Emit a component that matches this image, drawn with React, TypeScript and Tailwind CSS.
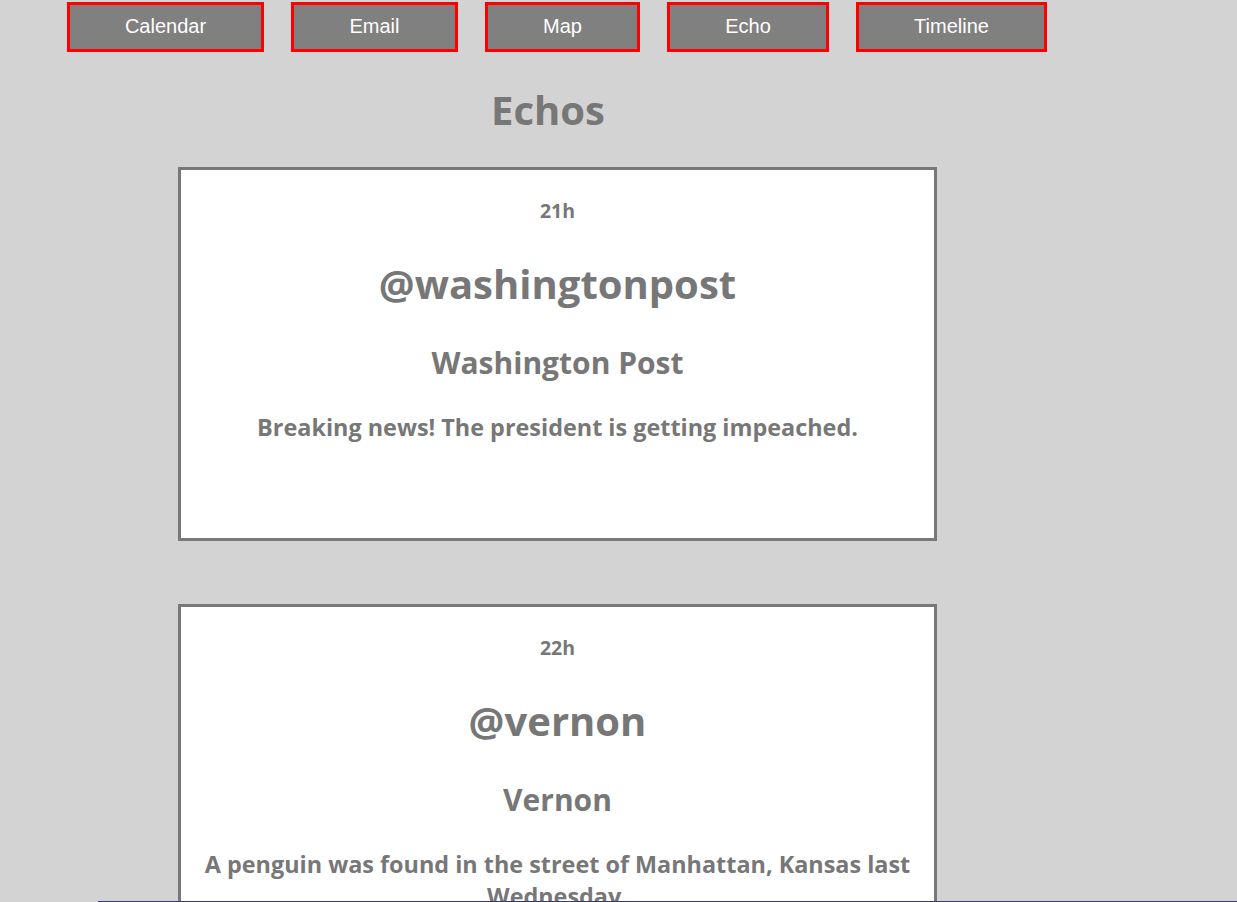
import React from 'react';

const NAV = [
  { label: 'Calendar', width: 'w-[197px]' },
  { label: 'Email', width: 'w-[167px]' },
  { label: 'Map', width: 'w-[155px]' },
  { label: 'Echo', width: 'w-[162px]' },
  { label: 'Timeline', width: 'w-[191px]' }
];

const ECHOS = [
  {
    id: 1,
    time: '21h',
    handle: '@washingtonpost',
    name: 'Washington Post',
    text: 'Breaking news! The president is getting impeached.'
  },
  {
    id: 2,
    time: '22h',
    handle: '@vernon',
    name: 'Vernon',
    text: 'A penguin was found in the street of Manhattan, Kansas last Wednesday.'
  }
];

export default function App() {
  return (
    <div className="min-h-[902px] bg-[#d3d3d3] font-['Open_Sans',sans-serif] text-[#777777]">
      {/* Nav */}
      <nav className="flex gap-[27px] pl-[67px] pt-[2px]">
        {NAV.map(item => (
          <button
            key={item.label}
            className={`${item.width} h-[50px] bg-[#808080] border-[3px] border-[#ff0000] pb-[2px] text-white text-[20px] font-['Liberation_Sans',Arial,sans-serif]`}
          >
            {item.label}
          </button>
        ))}
      </nav>

      <h1 className="mt-[34px] pr-[141px] text-center text-[40px] leading-[48px] font-bold">Echos</h1>

      {/* Echo list */}
      <div className="mt-[33px] ml-[178px] w-[759px] flex flex-col gap-[63px]">
        {ECHOS.map(echo => (
          <div key={echo.id} className="bg-white border-[3px] border-[#787878] text-center pt-[29px] pb-[95px] px-[20px]">
            <div className="text-[19.5px] leading-[24px] font-bold">{echo.time}</div>
            <div className="mt-[34px] text-[40px] leading-[54px] font-bold">{echo.handle}</div>
            <div className="mt-[33px] text-[30px] leading-[38px] font-bold">{echo.name}</div>
            <p className="mt-[29px] text-[23.4px] leading-[32px] font-bold">{echo.text}</p>
          </div>
        ))}
      </div>

      <div className="fixed bottom-0 left-[98px] right-0 h-px bg-[#333a6e]" />
    </div>
  );
}
